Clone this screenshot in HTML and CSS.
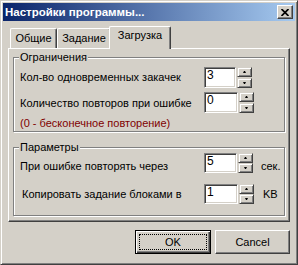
FILE: index.html
```html
<!DOCTYPE html>
<html lang="ru">
<head>
    <meta charset="UTF-8">
    <title>Настройки программы...</title>
    <link rel="stylesheet" href="styles.css">
</head>
<body>
    <div class="window">
        <div class="titlebar">
            <span class="title">Настройки программы...</span>
            <div class="close">
                <svg width="8" height="7" viewBox="0 0 8 7"><path d="M0.5 0 L7.5 7 M7.5 0 L0.5 7" stroke="#000" stroke-width="1.7" fill="none"/></svg>
            </div>
        </div>

        <div class="tabs">
            <div class="tab tab-general">Общие</div>
            <div class="tab tab-task">Задание</div>
            <div class="tab tab-load active">Загрузка</div>
        </div>

        <div class="panel">
            <fieldset class="group group-limits">
                <legend>Ограничения</legend>
                <div class="row row1">
                    <span class="label">Кол-во одновременных закачек</span>
                    <div class="spin">
                        <div class="edit">3</div>
                        <div class="arrows">
                            <span class="arrow"><i class="up"></i></span>
                            <span class="arrow"><i class="down"></i></span>
                        </div>
                    </div>
                </div>
                <div class="row row2">
                    <span class="label">Количество повторов при ошибке</span>
                    <div class="spin">
                        <div class="edit">0</div>
                        <div class="arrows">
                            <span class="arrow"><i class="up"></i></span>
                            <span class="arrow"><i class="down"></i></span>
                        </div>
                    </div>
                </div>
                <div class="hint">(0 - бесконечное повторение)</div>
            </fieldset>

            <fieldset class="group group-params">
                <legend>Параметры</legend>
                <div class="row row3">
                    <span class="label">При ошибке повторять через</span>
                    <div class="spin">
                        <div class="edit">5</div>
                        <div class="arrows">
                            <span class="arrow"><i class="up"></i></span>
                            <span class="arrow"><i class="down"></i></span>
                        </div>
                    </div>
                    <span class="unit">сек.</span>
                </div>
                <div class="row row4">
                    <span class="label">Копировать задание блоками в</span>
                    <div class="spin">
                        <div class="edit">1</div>
                        <div class="arrows">
                            <span class="arrow"><i class="up"></i></span>
                            <span class="arrow"><i class="down"></i></span>
                        </div>
                    </div>
                    <span class="unit">KB</span>
                </div>
            </fieldset>
        </div>

        <div class="buttons">
            <div class="btn btn-default"><span class="focus">OK</span></div>
            <div class="btn">Cancel</div>
        </div>
    </div>
</body>
</html>
```

FILE: styles.css
```css
body {
    margin: 0;
    font-family: "Liberation Sans", Arial, sans-serif;
    font-size: 11px;
    color: #000;
}

.window {
    width: 298px;
    height: 265px;
    box-sizing: border-box;
    background-color: #d4d0c8;
    border: 1px solid;
    border-color: #d4d0c8 #404040 #404040 #d4d0c8;
    box-shadow: inset 1px 1px #fff, inset -1px -1px #808080;
    padding: 2px;
}

.titlebar {
    height: 18px;
    display: flex;
    align-items: center;
    padding: 0 2px;
    background: linear-gradient(to right, #0a246a, #a6caf0);
}

.title {
    flex: 1;
    color: #fff;
    font-weight: bold;
    font-size: 11.5px;
}

.close {
    width: 16px;
    height: 14px;
    box-sizing: border-box;
    display: flex;
    align-items: center;
    justify-content: center;
    background-color: #d4d0c8;
    border: 1px solid;
    border-color: #fff #404040 #404040 #fff;
    box-shadow: inset -1px -1px #808080;
}

/* tabs */
.tabs {
    display: flex;
    align-items: flex-start;
    height: 20px;
    margin: 7px 0 0 7px;
}

.tab {
    height: 20px;
    box-sizing: border-box;
    line-height: 18px;
    text-align: center;
    border-top: 1px solid #fff;
    border-left: 1px solid #fff;
    border-right: 1px solid #404040;
    border-radius: 2px 2px 0 0;
    box-shadow: inset -1px 0 #808080;
    background-color: #d4d0c8;
}

.tab-general { width: 47px; }
.tab-task { width: 54px; }
.tab-load { width: 58px; }

.tab.active {
    position: relative;
    z-index: 1;
    width: 62px;
    height: 23px;
    margin: -2px -2px 0 -2px;
    line-height: 17px;
}

.panel {
    height: 174px;
    box-sizing: border-box;
    margin: 0 5px 0 5px;
    padding: 0 4px;
    border: 1px solid;
    border-color: #fff #404040 #404040 #fff;
    box-shadow: inset -1px -1px #808080;
}

/* group boxes */
.group {
    box-sizing: border-box;
    margin: 2px 0 0 0;
    padding: 0;
    min-width: 0;
    border: 1px solid #808080;
    box-shadow: inset 1px 1px #fff, 1px 1px #fff;
}

.group legend {
    margin-left: 5px;
    padding: 0 1px;
    line-height: 12px;
    background-color: #d4d0c8;
}

.group-limits { height: 81px; }
.group-params { height: 75px; margin-top: 9px; }

.row {
    display: flex;
    align-items: flex-start;
    padding-left: 6px;
}

.label {
    width: 184px;
    box-sizing: border-box;
    line-height: 14px;
    white-space: nowrap;
}

.unit {
    line-height: 14px;
}

.row1 { margin-top: 4px; }
.row1 .label { margin-top: 3px; }
.row1 .edit { width: 32px; }

.row2 { margin-top: 4px; }
.row2 .label { margin-top: 4px; }
.row2 .edit { width: 34px; }

.row3 .label, .row3 .unit { margin-top: 6px; }
.row3 .edit { width: 33px; height: 20px; }
.row3 .arrows { height: 20px; }
.row3 .unit { margin-left: 8px; }

.row4 { margin-top: 11px; }
.row4 .label { margin-top: 3px; padding-left: 2px; }
.row4 .unit { margin-top: 3px; margin-left: 9px; }
.row4 .edit { width: 34px; height: 20px; }
.row4 .arrows { height: 20px; }

.hint {
    margin: 3px 0 0 6px;
    line-height: 14px;
    color: #800000;
}

/* spin edit */
.spin {
    display: flex;
}

.edit {
    height: 21px;
    box-sizing: border-box;
    padding: 0 2px;
    font-size: 12px;
    line-height: 14px;
    background-color: #fff;
    border: 1px solid;
    border-color: #808080 #fff #fff #808080;
    box-shadow: inset 1px 1px #404040, inset -1px -1px #d4d0c8;
}

.arrows {
    height: 21px;
    display: flex;
    flex-direction: column;
    justify-content: space-between;
    margin-left: 1px;
}

.arrow {
    width: 15px;
    height: 10px;
    box-sizing: border-box;
    display: flex;
    align-items: center;
    justify-content: center;
    border: 1px solid;
    border-color: #d4d0c8 #404040 #404040 #d4d0c8;
    box-shadow: inset 1px 1px #fff, inset -1px -1px #808080;
}

.arrow i {
    width: 1px;
    height: 0;
    border-left: 1px solid transparent;
    border-right: 1px solid transparent;
}

.arrow .up { border-bottom: 2px solid #000; }
.arrow .down { border-top: 2px solid #000; }

/* dialog buttons */
.buttons {
    display: flex;
    justify-content: flex-end;
    gap: 4px;
    margin: 8px 5px 0 0;
}

.btn {
    width: 75px;
    height: 24px;
    box-sizing: border-box;
    display: flex;
    align-items: center;
    justify-content: center;
    border: 1px solid;
    border-color: #fff #404040 #404040 #fff;
    box-shadow: inset -1px -1px #808080;
}

.btn-default {
    width: 76px;
    padding: 3px;
    border-color: #000;
    box-shadow: inset 1px 1px #fff, inset -1px -1px #404040, inset -2px -2px #808080;
}

.focus {
    flex: 1;
    align-self: stretch;
    display: flex;
    align-items: center;
    justify-content: center;
    border: 1px dotted #000;
}
```
